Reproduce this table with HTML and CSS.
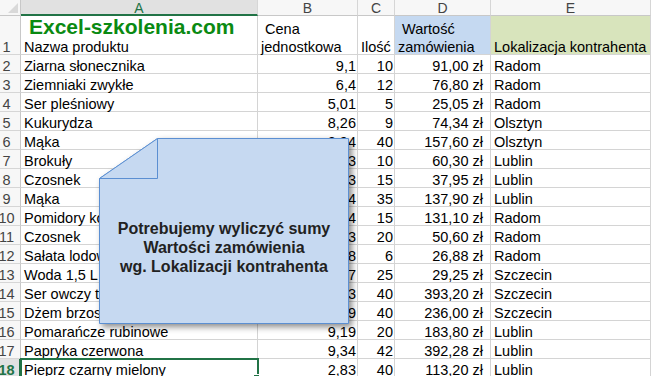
FILE: index.html
```html
<!DOCTYPE html>
<html lang="pl">
<head>
<meta charset="utf-8">
<title>Excel</title>
<link rel="stylesheet" href="styles.css">
</head>
<body>
<div class="sheet">
  <div class="corner"><span class="tri"></span></div>
  <div class="ch chsel">A</div>
  <div class="ch">B</div>
  <div class="ch">C</div>
  <div class="ch">D</div>
  <div class="ch">E</div>

  <div class="rh"><span>1</span></div>
  <div class="c head a1"><div class="brand">Excel-szkolenia.com</div><div class="hb">Nazwa produktu</div></div>
  <div class="c head"><div class="hb">&nbsp;Cena<br>jednostkowa</div></div>
  <div class="c head"><div class="hb">Ilość</div></div>
  <div class="c head blue"><div class="hb">&nbsp;Wartość<br>zamówienia</div></div>
  <div class="c head olive"><div class="hb">Lokalizacja kontrahenta</div></div>

  <div class="rh"><span>2</span></div><div class="c">Ziarna słonecznika</div><div class="c r">9,1</div><div class="c r">10</div><div class="c m">91,00 zł</div><div class="c">Radom</div>
  <div class="rh"><span>3</span></div><div class="c">Ziemniaki zwykłe</div><div class="c r">6,4</div><div class="c r">12</div><div class="c m">76,80 zł</div><div class="c">Radom</div>
  <div class="rh"><span>4</span></div><div class="c">Ser pleśniowy</div><div class="c r">5,01</div><div class="c r">5</div><div class="c m">25,05 zł</div><div class="c">Radom</div>
  <div class="rh"><span>5</span></div><div class="c">Kukurydza</div><div class="c r">8,26</div><div class="c r">9</div><div class="c m">74,34 zł</div><div class="c">Olsztyn</div>
  <div class="rh"><span>6</span></div><div class="c">Mąka</div><div class="c r">3,94</div><div class="c r">40</div><div class="c m">157,60 zł</div><div class="c">Olsztyn</div>
  <div class="rh"><span>7</span></div><div class="c">Brokuły</div><div class="c r">6,03</div><div class="c r">10</div><div class="c m">60,30 zł</div><div class="c">Lublin</div>
  <div class="rh"><span>8</span></div><div class="c">Czosnek</div><div class="c r">2,53</div><div class="c r">15</div><div class="c m">37,95 zł</div><div class="c">Lublin</div>
  <div class="rh"><span>9</span></div><div class="c">Mąka</div><div class="c r">3,94</div><div class="c r">35</div><div class="c m">137,90 zł</div><div class="c">Lublin</div>
  <div class="rh"><span>10</span></div><div class="c">Pomidory koktajlowe</div><div class="c r">8,74</div><div class="c r">15</div><div class="c m">131,10 zł</div><div class="c">Radom</div>
  <div class="rh"><span>11</span></div><div class="c">Czosnek</div><div class="c r">2,53</div><div class="c r">20</div><div class="c m">50,60 zł</div><div class="c">Radom</div>
  <div class="rh"><span>12</span></div><div class="c">Sałata lodowa</div><div class="c r">4,48</div><div class="c r">6</div><div class="c m">26,88 zł</div><div class="c">Radom</div>
  <div class="rh"><span>13</span></div><div class="c">Woda 1,5 L</div><div class="c r">1,17</div><div class="c r">25</div><div class="c m">29,25 zł</div><div class="c">Szczecin</div>
  <div class="rh"><span>14</span></div><div class="c">Ser owczy twardy</div><div class="c r">9,83</div><div class="c r">40</div><div class="c m">393,20 zł</div><div class="c">Szczecin</div>
  <div class="rh"><span>15</span></div><div class="c">Dżem brzoskwiniowy</div><div class="c r">5,9</div><div class="c r">40</div><div class="c m">236,00 zł</div><div class="c">Szczecin</div>
  <div class="rh"><span>16</span></div><div class="c">Pomarańcze rubinowe</div><div class="c r">9,19</div><div class="c r">20</div><div class="c m">183,80 zł</div><div class="c">Lublin</div>
  <div class="rh"><span>17</span></div><div class="c">Papryka czerwona</div><div class="c r">9,34</div><div class="c r">42</div><div class="c m">392,28 zł</div><div class="c">Lublin</div>
  <div class="rh rhsel"><span>18</span></div><div class="c active">Pieprz czarny mielony<i class="handle"></i></div><div class="c r">2,83</div><div class="c r">40</div><div class="c m">113,20 zł</div><div class="c">Lublin</div>
</div>

<div class="callout">
  <svg class="shape" width="256" height="192" viewBox="0 0 256 192">
    <path d="M59.5,1.5 L250.5,1.5 L250.5,186.5 L1.5,186.5 L1.5,41.5 Z" fill="#c6d9f1" stroke="#5b8fd2" stroke-width="1"/>
    <path d="M1.5,41.5 L59.5,1.5 L59.5,41.5 Z" fill="#c6d9f1" stroke="#5b8fd2" stroke-width="1"/>
  </svg>
  <div class="note">Potrebujemy wyliczyć sumy<br>Wartości zamówienia<br>wg. Lokalizacji kontrahenta</div>
</div>
</body>
</html>
```

FILE: styles.css
```css
html, body {
  margin: 0;
  padding: 0;
  background: #ffffff;
  overflow: hidden;
}
body {
  width: 652px;
  height: 376px;
  position: relative;
  font-family: "Liberation Sans", Arial, sans-serif;
  font-size: 14.5px;
  color: #000;
}
.sheet {
  display: grid;
  grid-template-columns: 21px 237px 100px 37px 96px 160px;
  grid-template-rows: 16px 39px repeat(17, 19px);
}
.corner {
  background: #f7f7f7;
  border-right: 1px solid #c8c8c8;
  border-bottom: 1px solid #c8c8c8;
  box-sizing: border-box;
  position: relative;
}
.tri {
  position: absolute;
  right: 2px;
  bottom: 2px;
  width: 0;
  height: 0;
  border-left: 10px solid transparent;
  border-bottom: 10px solid #d9d9d9;
}
.ch {
  background: #f7f7f7;
  border-right: 1px solid #d6d6d6;
  border-bottom: 1px solid #c8c8c8;
  box-sizing: border-box;
  color: #444;
  font-size: 14px;
  line-height: 15px;
  text-align: center;
  padding-top: 1px;
}
.ch.chsel {
  background: #e1e1e1;
  color: #217346;
  border-bottom: 2px solid #217346;
}
.rh {
  background: #f7f7f7;
  border-right: 1px solid #c8c8c8;
  border-bottom: 1px solid #d6d6d6;
  box-sizing: border-box;
  color: #444;
  font-size: 14.5px;
  display: flex;
  align-items: flex-end;
  overflow: hidden;
}
.rh span {
  display: block;
  margin-left: -7px;
  width: 27px;
  flex: none;
  text-align: center;
  line-height: 19px;
  padding-top: 2px;
  box-sizing: border-box;
  height: 19px;
  margin-bottom: -1px;
}
.rh.rhsel {
  background: #e1e1e1;
  color: #217346;
  font-weight: bold;
  border-right: 2px solid #217346;
}
.c {
  border-right: 1px solid #d4d4d4;
  border-bottom: 1px solid #d4d4d4;
  box-sizing: border-box;
  line-height: 19px;
  padding: 2px 2px 0 3px;
  white-space: nowrap;
  overflow: visible;
  position: relative;
}
.c.r {
  text-align: right;
  padding-right: 1px;
}
.c.m {
  text-align: right;
  padding-right: 7px;
}
.c.head {
  display: flex;
  flex-direction: column;
  justify-content: flex-end;
  padding: 0 2px 0 3px;
  line-height: 18px;
}
.c.head .hb {
  margin-bottom: -2px;
}
.c.a1 {
  justify-content: space-between;
}
.brand {
  color: #0a8a12;
  font-weight: bold;
  font-size: 21px;
  line-height: 22px;
  padding-left: 5px;
  margin-top: 0;
}
.blue {
  background: #c5d9f1;
}
.olive {
  background: #d8e4bc;
}
.active {
  outline: 2px solid #217346;
  outline-offset: -1px;
  z-index: 1;
}
.handle {
  position: absolute;
  right: -3px;
  bottom: -4px;
  width: 5px;
  height: 5px;
  background: #217346;
  border: 1px solid #fff;
}
.callout {
  position: absolute;
  left: 98px;
  top: 137px;
  width: 256px;
  height: 192px;
  z-index: 5;
}
.shape {
  position: absolute;
  left: 0;
  top: 0;
  filter: drop-shadow(3px 3px 3px rgba(0, 0, 0, 0.45));
}
.note {
  position: absolute;
  left: 1px;
  top: 37px;
  width: 250px;
  height: 146px;
  display: flex;
  align-items: center;
  justify-content: center;
  text-align: center;
  font-weight: bold;
  font-size: 16px;
  line-height: 19px;
  color: #222;
}
```
